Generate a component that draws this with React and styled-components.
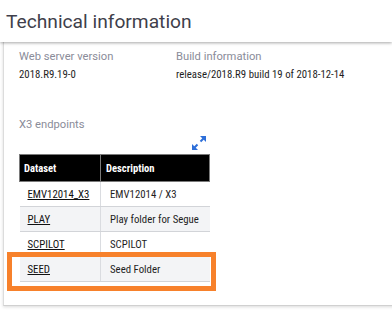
import React from "react";
import styled, { createGlobalStyle } from "styled-components";

const GlobalStyle = createGlobalStyle`
  html, body {
    margin: 0;
    padding: 0;
    background: #fff;
    font-family: Roboto, "Liberation Sans", sans-serif;
  }
`;

const Page = styled.div`
  width: 392px;
  height: 310px;
  overflow: hidden;
  position: relative;
  background: #fff;
`;

const Header = styled.div`
  position: relative;
  z-index: 2;
  height: 42px;
  padding-left: 6px;
  display: flex;
  align-items: center;
  background: #fff;
  box-shadow: 0 1px 3px rgba(0, 0, 0, 0.35);
  font-size: 19.2px;
  color: #3f3f4b;
`;

const Card = styled.div`
  position: relative;
  margin-left: 3px;
  width: 420px;
  height: 264px;
  box-sizing: border-box;
  border-left: 1px solid #dcdcdc;
  border-bottom: 1px solid #d0d0d0;
  box-shadow: 0 1px 3px rgba(0, 0, 0, 0.15);
  padding: 8px 0 0 15px;
`;

const InfoGrid = styled.div`
  display: grid;
  grid-template-columns: 157px auto;
  row-gap: 4px;
`;

const Label = styled.div`
  font-size: 11.2px;
  color: #8a8c99;
  line-height: 14px;
`;

const Value = styled.div`
  font-family: "Roboto Condensed", Roboto, sans-serif;
  font-stretch: condensed;
  font-size: 10.8px;
  color: #1e1e1e;
  line-height: 14px;
`;

const SectionTitle = styled(Label)`
  margin-top: 36px;
`;

const TableWrap = styled.div`
  position: relative;
  width: 191px;
`;

const IconRow = styled.div`
  display: flex;
  justify-content: flex-end;
  padding-right: 4px;
  margin-top: 4px;
  height: 14px;
`;

const Table = styled.table`
  width: 191px;
  margin-top: 4px;
  border-collapse: collapse;
  table-layout: fixed;
  font-family: "Roboto Condensed", Roboto, sans-serif;
  font-stretch: condensed;
  font-size: 10.8px;
`;

const Th = styled.th`
  background: #000;
  color: #fff;
  font-weight: 700;
  font-size: 10.6px;
  text-align: left;
  height: 27px;
  padding: 0 0 0 ${(p) => p.$pad}px;
  border: 1px solid #7a7a7a;
  box-sizing: border-box;
`;

const Tr = styled.tr`
  background: ${(p) => (p.$alt ? "#f3f4f6" : "#fff")};
`;

const Td = styled.td`
  height: 25px;
  padding: 0 0 0 ${(p) => p.$pad}px;
  color: #1e1e1e;
  border-bottom: 1px solid #d2d4d8;
  border-left: ${(p) => (p.$divider ? "1px solid #dadce0" : "none")};
  box-sizing: border-box;
  white-space: nowrap;
`;

const DataLink = styled.a`
  color: #111;
  text-decoration: underline;
`;

const Highlight = styled.div`
  position: absolute;
  left: -12px;
  top: ${(p) => p.$top}px;
  width: 209px;
  height: 39px;
  box-sizing: border-box;
  border: 5px solid #f7812b;
  pointer-events: none;
`;

const ExpandIcon = () => (
  <svg width="14" height="14" viewBox="0 0 14 14">
    <path d="M8 0 L14 0 L14 6 Z" fill="#2e6fd9" />
    <path d="M11.5 2.5 L8.5 5.5" stroke="#2e6fd9" strokeWidth="2" />
    <path d="M0 8 L0 14 L6 14 Z" fill="#2e6fd9" />
    <path d="M2.5 11.5 L5.5 8.5" stroke="#2e6fd9" strokeWidth="2" />
  </svg>
);

const rows = [
  { id: "EMV12014_X3", desc: "EMV12014 / X3" },
  { id: "PLAY", desc: "Play folder for Segue" },
  { id: "SCPILOT", desc: "SCPILOT" },
  { id: "SEED", desc: "Seed Folder" },
];

export default function App() {
  return (
    <Page>
      <GlobalStyle />
      <Header>Technical information</Header>
      <Card>
        <InfoGrid>
          <Label>Web server version</Label>
          <Label>Build information</Label>
          <Value>2018.R9.19-0</Value>
          <Value>release/2018.R9 build 19 of 2018-12-14</Value>
        </InfoGrid>
        <SectionTitle>X3 endpoints</SectionTitle>
        <TableWrap>
          <IconRow>
            <ExpandIcon />
          </IconRow>
          <Table>
            <colgroup>
              <col style={{ width: 81 }} />
              <col />
            </colgroup>
            <thead>
              <tr>
                <Th $pad={4}>Dataset</Th>
                <Th $pad={5}>Description</Th>
              </tr>
            </thead>
            <tbody>
              {rows.map((r, i) => (
                <Tr key={r.id} $alt={i % 2 === 1}>
                  <Td $pad={8}>
                    <DataLink href="#">{r.id}</DataLink>
                  </Td>
                  <Td $divider $pad={9}>
                    {r.desc}
                  </Td>
                </Tr>
              ))}
            </tbody>
          </Table>
          <Highlight $top={116} />
        </TableWrap>
      </Card>
    </Page>
  );
}
